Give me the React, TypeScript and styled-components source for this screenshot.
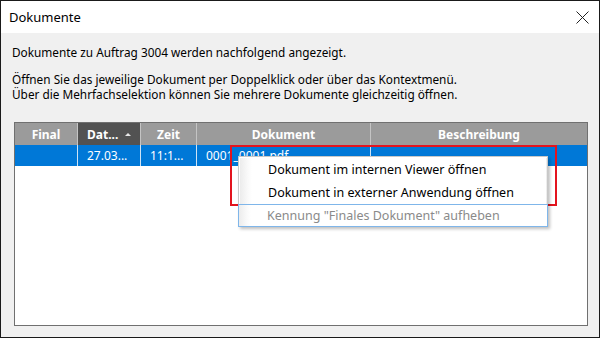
import React from "react";
import styled, { createGlobalStyle } from "styled-components";

const Global = createGlobalStyle`
  html, body { margin: 0; padding: 0; background: #f0f0f0; }
  body { font-family: "Noto Sans", "Segoe UI", sans-serif; }
  * { box-sizing: border-box; }
`;

const Window = styled.div`
  width: 600px;
  height: 338px;
  border: 1px solid #1a1a1a;
  display: flex;
  flex-direction: column;
  background: #f0f0f0;
  overflow: hidden;
`;

const TitleBar = styled.div`
  height: 32px;
  background: #ffffff;
  display: flex;
  align-items: center;
  justify-content: space-between;
  padding: 0 10px 0 8px;
`;

const Title = styled.span`
  font-size: 13px;
  color: #000;
`;

const CloseBtn = styled.div`
  width: 14px;
  height: 14px;
  display: flex;
  align-items: center;
  justify-content: center;
`;

const Body = styled.div`
  flex: 1;
  display: flex;
  flex-direction: column;
  padding: 12px 11px 11px 11px;
`;

const Para = styled.p`
  margin: 0 0 12px 0;
  font-size: 11.8px;
  line-height: 15px;
  color: #000;
`;

const Table = styled.div`
  margin: 8px 0 0 2px;
  flex: 1;
  border: 1px solid #707070;
  background: #fff;
  position: relative;
  display: flex;
  flex-direction: column;
`;

const cols = "63px 63px 56px 174px 216px";

const HeaderRow = styled.div`
  display: grid;
  grid-template-columns: ${cols};
  height: 22px;
  background: #9b9b9b;
`;

const HeaderCell = styled.div<{ $sorted?: boolean }>`
  background: ${(p) => (p.$sorted ? "#525252" : "#9b9b9b")};
  border-right: 1px solid #c4c4c4;
  color: #fff;
  font-weight: 700;
  font-size: 12px;
  display: flex;
  align-items: center;
  justify-content: ${(p) => (p.$sorted ? "flex-start" : "center")};
  padding-left: ${(p) => (p.$sorted ? "9px" : "0")};
  &:last-child { border-right: none; }
`;

const SortArrow = styled.span`
  margin-left: 7px;
  width: 0;
  height: 0;
  border-left: 3px solid transparent;
  border-right: 3px solid transparent;
  border-bottom: 3px solid #e8e8e8;
`;

const DataRow = styled.div`
  display: grid;
  grid-template-columns: ${cols};
  height: 21px;
  background: #0078d7;
`;

const DataCell = styled.div`
  border-right: 1px solid #cfe3f5;
  color: #fff;
  font-size: 12px;
  display: flex;
  align-items: center;
  padding-left: 9px;
  white-space: nowrap;
  overflow: hidden;
  &:last-child { border-right: none; }
`;

const Menu = styled.div`
  position: absolute;
  left: 223px;
  top: 33px;
  width: 310px;
  background: #fff;
  border: 1px solid #c8c8c8;
  box-shadow: 2px 2px 3px rgba(0, 0, 0, 0.25);
  padding-top: 1px;
`;

const MenuItem = styled.div<{ $disabled?: boolean }>`
  position: relative;
  height: 23px;
  display: flex;
  align-items: center;
  padding-left: 28px;
  font-size: 12.5px;
  color: ${(p) => (p.$disabled ? "#8a8a8a" : "#000")};
  border: 1px solid ${(p) => (p.$disabled ? "#7fb6ea" : "transparent")};
  margin: ${(p) => (p.$disabled ? "0 -1px -1px -1px" : "0")};
  background: linear-gradient(to right, #ececec 0px, #fafafa 8px, #fff 12px);
`;

const Highlight = styled.div`
  position: absolute;
  left: 215px;
  top: 22px;
  width: 327px;
  height: 61px;
  border: 2px solid #e3141e;
  pointer-events: none;
`;

const CloseIcon = () => (
  <svg width="13" height="13" viewBox="0 0 13 13">
    <path d="M0.5 0.5 L12.5 12.5 M12.5 0.5 L0.5 12.5" stroke="#222" strokeWidth="1" fill="none" />
  </svg>
);

export default function App() {
  return (
    <>
      <Global />
      <Window>
        <TitleBar>
          <Title>Dokumente</Title>
          <CloseBtn>
            <CloseIcon />
          </CloseBtn>
        </TitleBar>
        <Body>
          <Para>Dokumente zu Auftrag 3004 werden nachfolgend angezeigt.</Para>
          <Para>
            Öffnen Sie das jeweilige Dokument per Doppelklick oder über das Kontextmenü.
            <br />
            Über die Mehrfachselektion können Sie mehrere Dokumente gleichzeitig öffnen.
          </Para>
          <Table>
            <HeaderRow>
              <HeaderCell>Final</HeaderCell>
              <HeaderCell $sorted>
                Dat...
                <SortArrow />
              </HeaderCell>
              <HeaderCell>Zeit</HeaderCell>
              <HeaderCell>Dokument</HeaderCell>
              <HeaderCell>Beschreibung</HeaderCell>
            </HeaderRow>
            <DataRow>
              <DataCell />
              <DataCell>27.03...</DataCell>
              <DataCell>11:1...</DataCell>
              <DataCell>0001_0001.pdf</DataCell>
              <DataCell />
            </DataRow>
            <Highlight />
            <Menu>
              <MenuItem>Dokument im internen Viewer öffnen</MenuItem>
              <MenuItem>Dokument in externer Anwendung öffnen</MenuItem>
              <MenuItem $disabled>Kennung "Finales Dokument" aufheben</MenuItem>
            </Menu>
          </Table>
        </Body>
      </Window>
    </>
  );
}
